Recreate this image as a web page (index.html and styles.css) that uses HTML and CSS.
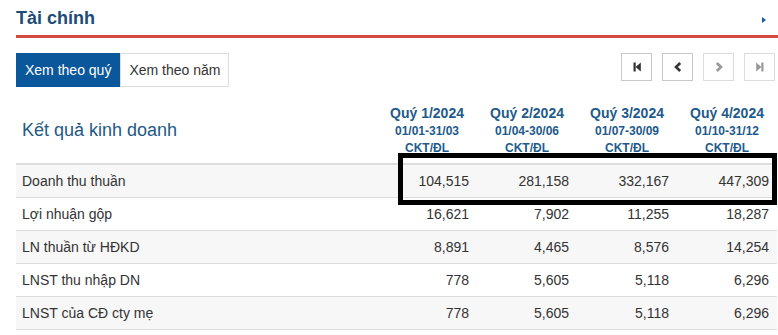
FILE: index.html
```html
<!DOCTYPE html>
<html lang="vi">
<head>
<meta charset="utf-8">
<title>Tài chính</title>
<link rel="stylesheet" href="styles.css">
</head>
<body>
<div class="page">
  <div class="head">
    <h2 class="title">Tài chính</h2>
    <span class="more"></span>
  </div>
  <div class="toolbar">
    <div class="tabs">
      <span class="tab active">Xem theo quý</span>
      <span class="tab">Xem theo năm</span>
    </div>
    <div class="pager">
      <span class="pbtn"><svg width="10" height="10" viewBox="0 0 10 10"><rect x="1.5" y="0.5" width="2.2" height="9" fill="#333"/><path d="M8.8 0.5 L3.5 5 L8.8 9.5 Z" fill="#333"/></svg></span>
      <span class="pbtn"><svg width="10" height="10" viewBox="0 0 10 10"><path d="M7.2 1 L3 5 L7.2 9" fill="none" stroke="#333" stroke-width="2.6"/></svg></span>
      <span class="pbtn off"><svg width="10" height="10" viewBox="0 0 10 10"><path d="M2.8 1 L7 5 L2.8 9" fill="none" stroke="#999" stroke-width="2.6"/></svg></span>
      <span class="pbtn off"><svg width="10" height="10" viewBox="0 0 10 10"><path d="M1.2 0.5 L6.5 5 L1.2 9.5 Z" fill="#999"/><rect x="6.3" y="0.5" width="2.2" height="9" fill="#999"/></svg></span>
    </div>
  </div>
  <table class="fin">
    <thead>
      <tr>
        <th class="lbl">Kết quả kinh doanh</th>
        <th class="q"><div class="qn">Quý 1/2024</div><div class="qd">01/01-31/03</div><div class="qc">CKT/ĐL</div></th>
        <th class="q"><div class="qn">Quý 2/2024</div><div class="qd">01/04-30/06</div><div class="qc">CKT/ĐL</div></th>
        <th class="q"><div class="qn">Quý 3/2024</div><div class="qd">01/07-30/09</div><div class="qc">CKT/ĐL</div></th>
        <th class="q"><div class="qn">Quý 4/2024</div><div class="qd">01/10-31/12</div><div class="qc">CKT/ĐL</div></th>
      </tr>
    </thead>
    <tbody>
      <tr><td class="name">Doanh thu thuần</td><td>104,515</td><td>281,158</td><td>332,167</td><td>447,309</td></tr>
      <tr><td class="name">Lợi nhuận gộp</td><td>16,621</td><td>7,902</td><td>11,255</td><td>18,287</td></tr>
      <tr><td class="name">LN thuần từ HĐKD</td><td>8,891</td><td>4,465</td><td>8,576</td><td>14,254</td></tr>
      <tr><td class="name">LNST thu nhập DN</td><td>778</td><td>5,605</td><td>5,118</td><td>6,296</td></tr>
      <tr><td class="name">LNST của CĐ cty mẹ</td><td>778</td><td>5,605</td><td>5,118</td><td>6,296</td></tr>
    </tbody>
  </table>
  <div class="mark"></div>
</div>
</body>
</html>
```
FILE: styles.css
```css
html, body {
  margin: 0;
  padding: 0;
  background: #fff;
}
body {
  font-family: "Liberation Sans", Arial, sans-serif;
  color: #333;
}
.page {
  position: relative;
  width: 762px;
  padding-left: 16px;
  height: 335px;
  overflow: hidden;
}
.head {
  display: flex;
  justify-content: space-between;
  align-items: center;
  padding: 8px 12px 6px 0;
  border-bottom: 3px solid #d4493f;
}
.title {
  margin: 0;
  font-size: 18px;
  line-height: 21px;
  font-weight: bold;
  color: #1d4b78;
}
.more {
  width: 0;
  height: 0;
  border-left: 4px solid #1a5a96;
  border-top: 3.5px solid transparent;
  border-bottom: 3.5px solid transparent;
  margin-top: 3px;
}
.toolbar {
  display: flex;
  justify-content: space-between;
  align-items: flex-start;
  margin-top: 15px;
  padding-right: 3px;
}
.tabs {
  display: flex;
}
.tab {
  font-size: 14px;
  line-height: 20px;
  padding: 6px 8px;
  border: 1px solid #ddd;
  color: #333;
  background: #fff;
}
.tab.active {
  background: #0b579b;
  border-color: #0b579b;
  color: #fff;
}
.pager {
  display: flex;
  gap: 10px;
}
.pbtn {
  box-sizing: border-box;
  width: 31px;
  height: 28px;
  border: 1px solid #c8c8c8;
  display: flex;
  align-items: center;
  justify-content: center;
  background: #fff;
}
.pbtn.off {
  border-color: #dcdcdc;
}
.fin {
  margin-top: 8px;
  width: 761px;
  border-collapse: separate;
  border-spacing: 0;
  font-size: 14px;
}
.fin th {
  border-bottom: 2px solid #ddd;
  padding: 9px 0 7px;
  vertical-align: middle;
}
.fin th.lbl {
  text-align: left;
  font-weight: normal;
  font-size: 18px;
  color: #235985;
  padding: 7px 0 5px 6px;
}
.fin th.q {
  width: 100px;
  text-align: center;
  color: #1e5a8c;
}
.qn {
  font-size: 14px;
  line-height: 18px;
  font-weight: bold;
}
.qd {
  font-size: 12px;
  line-height: 18px;
  font-weight: bold;
}
.qc {
  font-size: 12px;
  line-height: 16px;
  font-weight: bold;
}
.fin td {
  padding: 6px 8px 6px 0;
  line-height: 20px;
  border-bottom: 1px solid #ddd;
  text-align: right;
  color: #333;
}
.fin td.name {
  text-align: left;
  padding-left: 6px;
}
.fin tbody tr:nth-child(odd) td {
  background: #f7f7f7;
}
.mark {
  position: absolute;
  left: 398px;
  top: 153px;
  width: 379px;
  height: 52px;
  box-sizing: border-box;
  border: 5px solid #000;
}
```
